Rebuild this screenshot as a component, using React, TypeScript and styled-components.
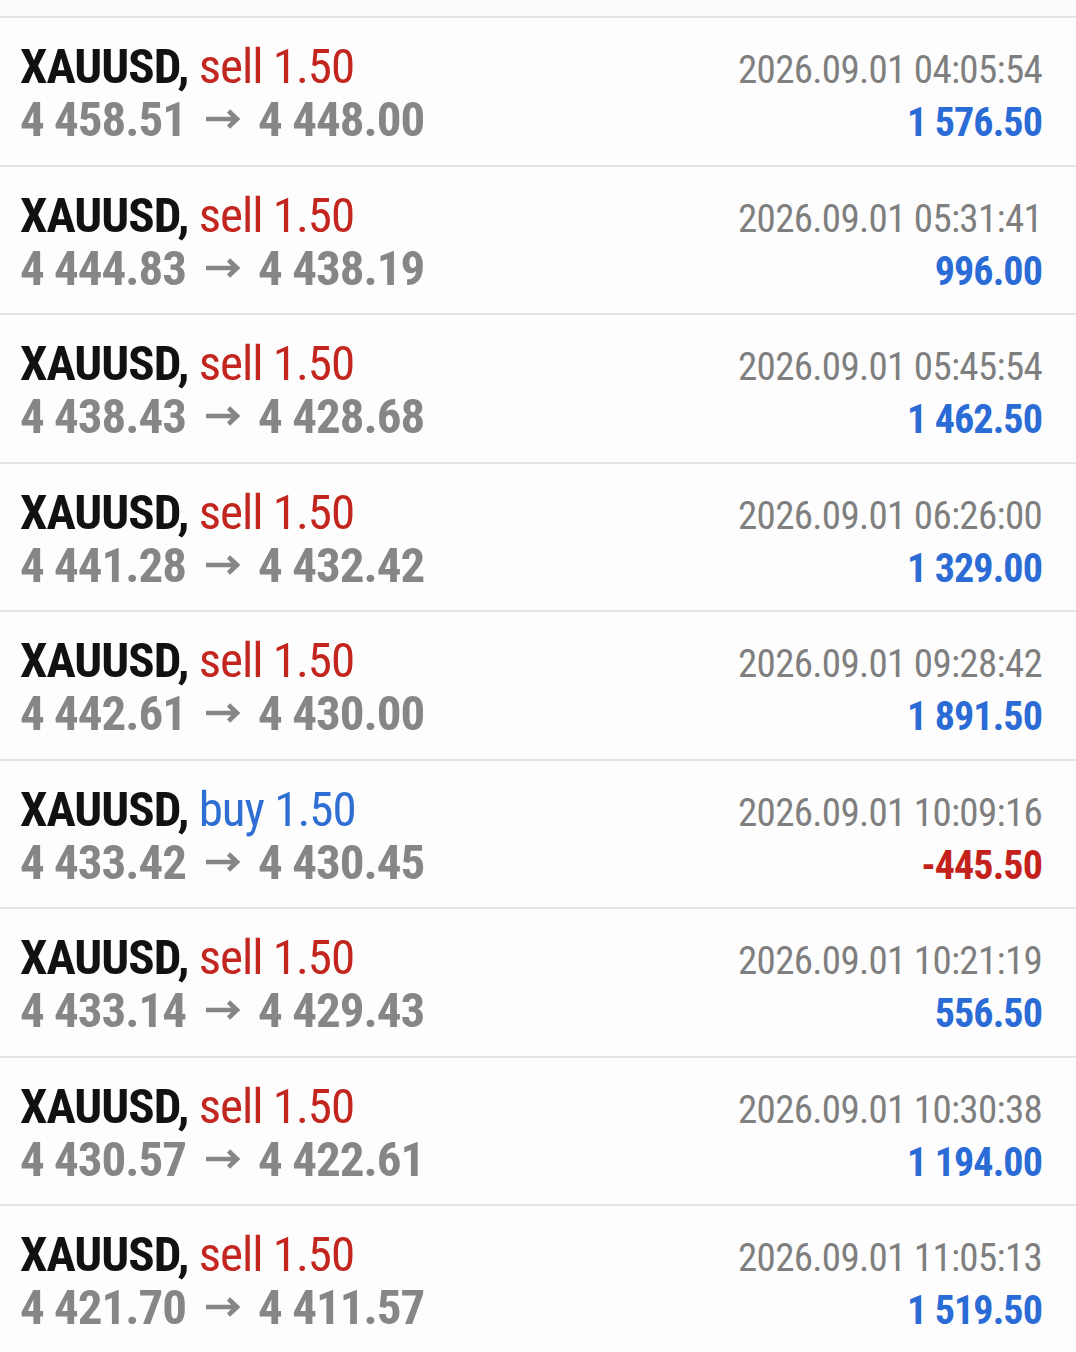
import React from "react";
import styled, { createGlobalStyle } from "styled-components";

const Global = createGlobalStyle`
  html, body { margin: 0; padding: 0; background: #fbfbfb; }
  body { font-family: "Roboto Condensed", "Liberation Sans Narrow", Roboto, sans-serif; }
`;

type Trade = {
  side: "sell" | "buy";
  lot: string;
  open: string;
  close: string;
  time: string;
  profit: string;
};

const trades: Trade[] = [
  { side: "sell", lot: "1.50", open: "4 458.51", close: "4 448.00", time: "2026.09.01 04:05:54", profit: "1 576.50" },
  { side: "sell", lot: "1.50", open: "4 444.83", close: "4 438.19", time: "2026.09.01 05:31:41", profit: "996.00" },
  { side: "sell", lot: "1.50", open: "4 438.43", close: "4 428.68", time: "2026.09.01 05:45:54", profit: "1 462.50" },
  { side: "sell", lot: "1.50", open: "4 441.28", close: "4 432.42", time: "2026.09.01 06:26:00", profit: "1 329.00" },
  { side: "sell", lot: "1.50", open: "4 442.61", close: "4 430.00", time: "2026.09.01 09:28:42", profit: "1 891.50" },
  { side: "buy", lot: "1.50", open: "4 433.42", close: "4 430.45", time: "2026.09.01 10:09:16", profit: "-445.50" },
  { side: "sell", lot: "1.50", open: "4 433.14", close: "4 429.43", time: "2026.09.01 10:21:19", profit: "556.50" },
  { side: "sell", lot: "1.50", open: "4 430.57", close: "4 422.61", time: "2026.09.01 10:30:38", profit: "1 194.00" },
  { side: "sell", lot: "1.50", open: "4 421.70", close: "4 411.57", time: "2026.09.01 11:05:13", profit: "1 519.50" },
];

const List = styled.div`
  padding-top: 16px;
  background: #fbfbfb;
`;

const Row = styled.div`
  box-sizing: border-box;
  height: 148.5px;
  border-top: 2px solid #e4e4e4;
  background: #fdfdfd;
  padding: 22px 34px 0 20px;
  display: grid;
  grid-template-columns: 1fr auto;
  grid-template-rows: 53px 53px;
  align-items: baseline;
`;

const Title = styled.div`
  font-size: 49px;
  line-height: 53px;
  letter-spacing: -1px;
  white-space: nowrap;
`;

const Symbol = styled.span`
  color: #111111;
  font-weight: 700;
`;

const Side = styled.span<{ $buy: boolean }>`
  color: ${(p) => (p.$buy ? "#2f6fd3" : "#c3261f")};
  font-weight: 400;
`;

const Prices = styled.div`
  font-size: 49px;
  line-height: 53px;
  letter-spacing: -1px;
  font-weight: 700;
  color: #868686;
  white-space: nowrap;
`;

const ArrowIcon = styled.svg`
  width: 36px;
  height: 20px;
  margin: 0 17px 0 19px;
  vertical-align: 7px;
`;

const Time = styled.div`
  font-size: 39px;
  line-height: 53px;
  letter-spacing: -0.7px;
  color: #7f7f7f;
  text-align: right;
  white-space: nowrap;
`;

const Profit = styled.div<{ $neg: boolean }>`
  font-size: 40px;
  line-height: 53px;
  letter-spacing: -0.9px;
  font-weight: 700;
  text-align: right;
  color: ${(p) => (p.$neg ? "#c3221c" : "#2a6bd6")};
  white-space: nowrap;
`;

function Arrow() {
  return (
    <ArrowIcon viewBox="0 0 36 20" aria-label="→">
      <path
        d="M1 10 H31 M23.5 2 L32 10 L23.5 18"
        fill="none"
        stroke="#868686"
        strokeWidth="4.6"
        strokeLinecap="butt"
        strokeLinejoin="miter"
      />
    </ArrowIcon>
  );
}

export default function App() {
  return (
    <>
      <Global />
      <List>
        {trades.map((t, i) => (
          <Row key={i}>
            <Title>
              <Symbol>XAUUSD,</Symbol> <Side $buy={t.side === "buy"}>{t.side} {t.lot}</Side>
            </Title>
            <Time>{t.time}</Time>
            <Prices>
              {t.open}
              <Arrow />
              {t.close}
            </Prices>
            <Profit $neg={t.profit.startsWith("-")}>{t.profit}</Profit>
          </Row>
        ))}
      </List>
    </>
  );
}
